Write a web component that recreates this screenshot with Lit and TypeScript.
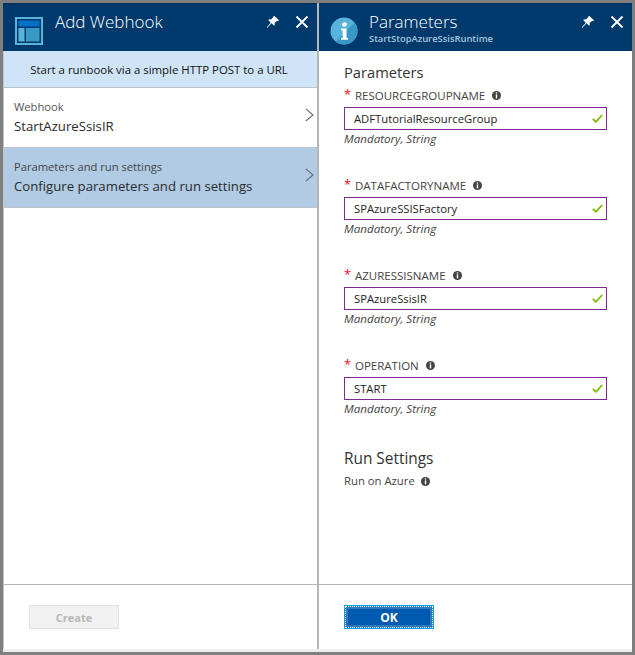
import { LitElement, html, css, svg } from 'lit';
import { customElement } from 'lit/decorators.js';

const pinIcon = svg`<svg class="ico" width="14" height="14" viewBox="0 0 16 16"><path fill="#fff" d="M9.600 1.200l5.200 4.900-1 .9-1-.4-3 2.600c.4 1.400.2 2.300-.4 3.100L6.300 9.500 1.500 14.500l-.6-.4 4.500-5.300L2.500 5.700c.9-.7 2-.9 3.300-.5l2.600-2.900-.1-1z"/></svg>`;
const closeIcon = svg`<svg class="ico" width="14" height="14" viewBox="0 0 14 14"><path stroke="#fff" stroke-width="1.800" fill="none" d="M1.500 1.500l11 11M12.500 1.500l-11 11"/></svg>`;
const chevron = svg`<svg class="chev" width="9" height="14" viewBox="0 0 9 14"><path stroke="#5f6b76" stroke-width="1.100" fill="none" d="M.8.800L8 7 .8 13.200"/></svg>`;
const tick = svg`<svg width="11" height="9" viewBox="0 0 11 9"><path stroke="#7fba00" stroke-width="1.800" fill="none" d="M.8 4.800l3 3L10.200 1"/></svg>`;
const infoDot = svg`<svg class="info" width="9" height="9" viewBox="0 0 9 9"><circle cx="4.500" cy="4.500" r="4.500" fill="#444"/><rect x="3.800" y="1.300" width="1.400" height="1.300" fill="#fff"/><rect x="3.800" y="3.400" width="1.400" height="4" fill="#fff"/></svg>`;

const params = [
  { name: 'RESOURCEGROUPNAME', value: 'ADFTutorialResourceGroup' },
  { name: 'DATAFACTORYNAME', value: 'SPAzureSSISFactory' },
  { name: 'AZURESSISNAME', value: 'SPAzureSsisIR' },
  { name: 'OPERATION', value: 'START' },
];

@customElement('app-root')
export class AppRoot extends LitElement {
  static styles = css`
    :host {
      display: block;
      width: 635px;
      height: 655px;
      box-sizing: border-box;
      padding: 3px;
      background: #7f7f7f;
      font-family: "Open Sans", "Noto Sans", sans-serif;
      color: #222;
    }
    .frame {
      display: flex;
      height: 649px;
      box-sizing: border-box;
      background: #fff;
      border-bottom: 3px solid #eee;
    }
    .blade {
      display: flex;
      flex-direction: column;
      width: 314px;
      flex: none;
    }
    .blade.right {
      width: 313px;
    }
    .divider {
      width: 2px;
      flex: none;
      background: #b5b5b5;
    }
    .body {
      flex: 1;
      display: flex;
      flex-direction: column;
      border-left: 1px solid #c4c4c4;
    }
    .head {
      display: flex;
      align-items: flex-start;
      height: 48px;
      background: #003a6c;
      color: #fff;
      flex: none;
      border-top: 2px solid #00335f;
      box-sizing: border-box;
    }
    .logo {
      width: 28px;
      height: 28px;
      margin: 12px 12px 0 12px;
      flex: none;
    }
    .right .logo {
      margin: 12px 11px 0 11px;
    }
    .titles {
      flex: 1;
      padding-top: 5px;
    }
    .title {
      font-size: 17px;
      line-height: 24px;
      font-weight: 300;
    }
    .sub {
      font-size: 9.400px;
      line-height: 10px;
      color: #a9c4dc;
      font-weight: 600;
    }
    .ico {
      display: block;
      margin-top: 10px;
    }
    .pin {
      margin-right: 15px;
    }
    .close {
      margin-right: 8px;
    }
    .notice {
      height: 37px;
      box-sizing: border-box;
      display: flex;
      align-items: center;
      justify-content: center;
      padding-right: 3px;
      background: #cfe4f6;
      border-bottom: 1px solid #b9c3cc;
      font-size: 11.400px;
      color: #111;
      flex: none;
    }
    .row {
      display: flex;
      align-items: center;
      justify-content: space-between;
      height: 60px;
      box-sizing: border-box;
      padding: 0 3px 0 10px;
      border-bottom: 1px solid #bcc4cb;
      flex: none;
    }
    .row.sel {
      background: #b1cbe4;
    }
    .chev {
      margin-top: -5px;
    }
    .row-label {
      font-size: 11.200px;
      line-height: 15px;
      margin-bottom: 2px;
      color: #555;
    }
    .row.sel .row-label {
      color: #444;
    }
    .row-value {
      font-size: 13.200px;
      line-height: 21px;
      color: #2b2b2b;
    }
    .spacer {
      flex: 1;
    }
    .foot {
      flex: none;
      height: 65px;
      border-top: 1px solid #b5b5b5;
      padding: 20px 0 0 25px;
      box-sizing: border-box;
    }
    .btn {
      width: 90px;
      height: 24px;
      box-sizing: border-box;
      display: flex;
      align-items: center;
      justify-content: center;
      font-size: 11px;
      font-weight: 700;
    }
    .btn.off {
      background: #f1f1f1;
      border: 1px solid #e2e2e2;
      color: #b8b8b8;
    }
    .btn.ok {
      background: #005bb0;
      color: #fff;
      border: 1px solid #00a4e0;
      outline: 1px dotted #fff;
      outline-offset: -2px;
      box-shadow: inset 0 0 0 3px #2f78c0;
      font-size: 12px;
    }
    .form {
      flex: 1;
      padding: 9px 25px 0 25px;
      box-sizing: border-box;
    }
    h2 {
      margin: 0;
      font-size: 14.700px;
      line-height: 24px;
      font-weight: 400;
      color: #333;
    }
    .field {
      height: 90px;
    }
    .label {
      display: flex;
      align-items: center;
      height: 23px;
      box-sizing: border-box;
      font-size: 11.500px;
      color: #444;
    }
    .label .info {
      margin-left: 7px;
    }
    .star {
      width: 11px;
      color: #e81123;
      font-size: 13px;
      line-height: 14px;
      margin-top: -3px;
    }
    .input {
      display: flex;
      align-items: center;
      justify-content: space-between;
      height: 23px;
      box-sizing: border-box;
      border: 1px solid #7a2a90;
      padding: 0 3px 0 9px;
      font-size: 11.250px;
      color: #222;
    }
    .hint {
      font-size: 11.600px;
      line-height: 18px;
      font-style: italic;
      color: #444;
    }
    h2.run-title {
      margin-top: 3px;
      font-size: 15.400px;
    }
    .run {
      display: flex;
      align-items: center;
      gap: 6px;
      font-size: 11.300px;
      line-height: 20px;
      color: #444;
    }
  `;

  render() {
    return html`
      <div class="frame">
        <section class="blade">
          <header class="head">
            <svg class="logo" viewBox="0 0 28 28">
              <rect width="28" height="28" fill="#59b4d9"/>
              <rect x="2" y="2" width="24" height="24" fill="#003a6c"/>
              <rect x="3.500" y="3.500" width="21" height="6" fill="#0072c6"/>
              <rect x="3.500" y="11" width="6" height="13.500" fill="#59b4d9"/>
              <rect x="11" y="11" width="13.500" height="13.500" fill="#3999c6"/>
            </svg>
            <div class="titles"><div class="title">Add Webhook</div></div>
            <span class="pin">${pinIcon}</span>
            <span class="close">${closeIcon}</span>
          </header>
          <div class="body">
            <div class="notice">Start a runbook via a simple HTTP POST to a URL</div>
            <div class="row">
              <div>
                <div class="row-label">Webhook</div>
                <div class="row-value">StartAzureSsisIR</div>
              </div>
              ${chevron}
            </div>
            <div class="row sel">
              <div>
                <div class="row-label">Parameters and run settings</div>
                <div class="row-value">Configure parameters and run settings</div>
              </div>
              ${chevron}
            </div>
            <div class="spacer"></div>
            <footer class="foot"><div class="btn off">Create</div></footer>
          </div>
        </section>
        <div class="divider"></div>
        <section class="blade right">
          <header class="head">
            <svg class="logo" viewBox="0 0 28 28">
              <circle cx="14" cy="14" r="13.500" fill="#59b4d9"/>
              <path d="M14 .5a13.500 13.500 0 0 1 0 27c-3 0-6-1-8-3L24 6a13.500 13.500 0 0 0-10-5.500z" fill="#3999c6"/>
              <circle cx="14.500" cy="7.500" r="2.300" fill="#fff"/>
              <path d="M11 11.500h5.500V21H18v1.700h-7V21h1.600v-7.800H11z" fill="#fff"/>
            </svg>
            <div class="titles">
              <div class="title">Parameters</div>
              <div class="sub">StartStopAzureSsisRuntime</div>
            </div>
            <span class="pin">${pinIcon}</span>
            <span class="close">${closeIcon}</span>
          </header>
          <div class="form">
            <h2>Parameters</h2>
            ${params.map(
              (p) => html`
                <div class="field">
                  <div class="label"><span class="star">*</span>${p.name}${infoDot}</div>
                  <div class="input">${p.value}${tick}</div>
                  <div class="hint">Mandatory, String</div>
                </div>
              `,
            )}
            <h2 class="run-title">Run Settings</h2>
            <div class="run">Run on Azure ${infoDot}</div>
          </div>
          <footer class="foot"><div class="btn ok">OK</div></footer>
        </section>
      </div>
    `;
  }
}
